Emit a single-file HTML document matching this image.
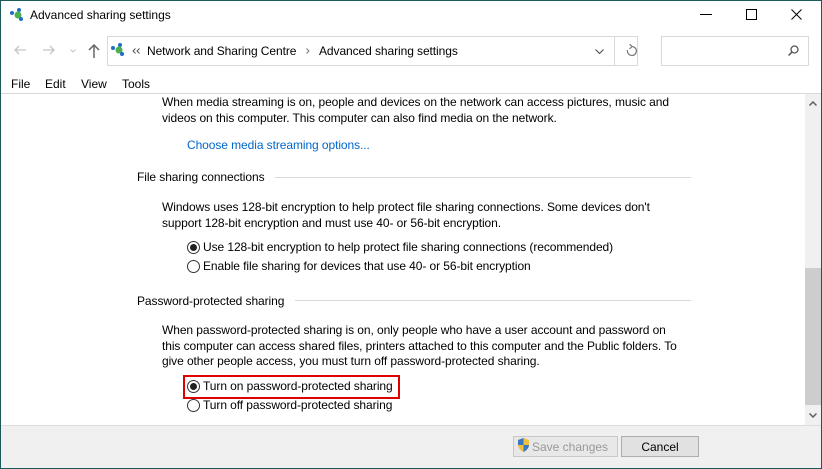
<!DOCTYPE html>
<html><head><style>
*{margin:0;padding:0;box-sizing:border-box}
body{width:822px;height:469px;overflow:hidden;background:#fff;font-family:"Liberation Sans",sans-serif;font-size:12px;color:#000;position:relative}
.a{position:absolute;white-space:nowrap}
.t{letter-spacing:-0.08px}
.frame{position:absolute;left:0;top:0;width:822px;height:469px;border:1px solid #1c5a5a;pointer-events:none}
.rad{position:absolute;width:13px;height:13px;border:1px solid #333;border-radius:50%;background:#fff}
.rad.on::after{content:"";position:absolute;left:2px;top:2px;width:7px;height:7px;border-radius:50%;background:#222}
.hr{position:absolute;height:1px;background:#d9d9d9}
svg{position:absolute}
</style></head><body>
<svg style="left:9px;top:7px" width="16" height="14"><circle cx="3" cy="6" r="2" fill="#1e6fc2"/><circle cx="10" cy="3" r="2" fill="#1e6fc2"/><circle cx="9" cy="8" r="3.5" fill="#4caf50"/><circle cx="12" cy="12" r="2" fill="#1e6fc2"/></svg>
<div class="a" style="left:30px;top:8px">Advanced sharing settings</div>
<svg style="left:700px;top:14px" width="12" height="2"><path d="M0 0.5H12" stroke="#000"/></svg>
<svg style="left:746px;top:9px" width="11" height="11"><rect x="0.5" y="0.5" width="10" height="10" fill="none" stroke="#000"/></svg>
<svg style="left:791px;top:9px" width="11" height="11"><path d="M0.5 0.5L10.5 10.5M10.5 0.5L0.5 10.5" stroke="#000"/></svg>
<svg style="left:14px;top:45px" width="12" height="10"><path d="M1 5H12M5 1L1 5L5 9" stroke="#c5c5c5" fill="none" stroke-width="1.3"/></svg>
<svg style="left:43px;top:45px" width="12" height="10"><path d="M0 5H11M7 1L11 5L7 9" stroke="#c5c5c5" fill="none" stroke-width="1.3"/></svg>
<svg style="left:70px;top:49px" width="6" height="4"><path d="M0.5 0.5L3 3L5.5 0.5" stroke="#c5c5c5" fill="none"/></svg>
<svg style="left:88px;top:44px" width="12" height="14"><path d="M6 14V1M1 6L6 1L11 6" stroke="#666" fill="none" stroke-width="1.5"/></svg>
<div class="a" style="left:107px;top:36px;width:531px;height:30px;border:1px solid #d9d9d9"></div>
<div class="a" style="left:614px;top:36px;width:1px;height:30px;background:#d9d9d9"></div>
<svg style="left:110px;top:42px" width="16" height="14"><circle cx="3" cy="6" r="2" fill="#1e6fc2"/><circle cx="10" cy="3" r="2" fill="#1e6fc2"/><circle cx="9" cy="8" r="3.5" fill="#4caf50"/><circle cx="12" cy="12" r="2" fill="#1e6fc2"/></svg>
<svg style="left:132px;top:48px" width="8" height="6"><path d="M3.5 0.5L1 3L3.5 5.5M7.5 0.5L5 3L7.5 5.5" stroke="#555" fill="none"/></svg>
<div class="a t" style="left:147px;top:44px">Network and Sharing Centre</div>
<svg style="left:306px;top:48px" width="4" height="6"><path d="M0.5 0.5L3 3L0.5 5.5" stroke="#777" fill="none"/></svg>
<div class="a t" style="left:319px;top:44px">Advanced sharing settings</div>
<svg style="left:595px;top:49px" width="9" height="5"><path d="M0.5 0.5L4.5 4.5L8.5 0.5" stroke="#555" fill="none" stroke-width="1.2"/></svg>
<svg style="left:626px;top:44px" width="11" height="13"><path d="M5.5 2.5A4.5 4.5 0 1 1 1.5 6" stroke="#777" fill="none" stroke-width="1.2"/><path d="M3.5 0L6 2.5L3.5 5" stroke="#777" fill="none" stroke-width="1.2"/></svg>
<div class="a" style="left:661px;top:36px;width:148px;height:30px;border:1px solid #d9d9d9"></div>
<svg style="left:788px;top:45px" width="11" height="11"><circle cx="6.5" cy="4.5" r="3.5" stroke="#555" fill="none" stroke-width="1.3"/><path d="M4 7L0.5 10.5" stroke="#555" stroke-width="1.5"/></svg>
<div class="a" style="left:11px;top:77px">File</div>
<div class="a" style="left:45px;top:77px">Edit</div>
<div class="a" style="left:81px;top:77px">View</div>
<div class="a" style="left:122px;top:77px">Tools</div>
<div class="hr" style="left:0;top:93px;width:822px"></div>
<div class="a" style="left:805px;top:94px;width:16px;height:331px;background:#f0f0f0"></div>
<div class="a" style="left:805px;top:268px;width:16px;height:137px;background:#cdcdcd"></div>
<svg style="left:809px;top:101px" width="8" height="5"><path d="M0.5 4.5L4 1L7.5 4.5" stroke="#606060" fill="none" stroke-width="1.5"/></svg>
<svg style="left:809px;top:413px" width="8" height="5"><path d="M0.5 0.5L4 4L7.5 0.5" stroke="#606060" fill="none" stroke-width="1.5"/></svg>
<div class="a t" style="left:162px;top:95px;line-height:15.5px">When media streaming is on, people and devices on the network can access pictures, music and<br>videos on this computer. This computer can also find media on the network.</div>
<div class="a t" style="left:187px;top:138px;color:#0066cc">Choose media streaming options...</div>
<div class="a t" style="left:137px;top:170px">File sharing connections</div>
<div class="hr" style="left:275px;top:177px;width:416px"></div>
<div class="a t" style="left:162px;top:200px;line-height:15.5px">Windows uses 128-bit encryption to help protect file sharing connections. Some devices don't<br>support 128-bit encryption and must use 40- or 56-bit encryption.</div>
<div class="rad on" style="left:187px;top:241px"></div>
<div class="a t" style="left:203px;top:240px">Use 128-bit encryption to help protect file sharing connections (recommended)</div>
<div class="rad" style="left:187px;top:260px"></div>
<div class="a t" style="left:203px;top:259px">Enable file sharing for devices that use 40- or 56-bit encryption</div>
<div class="a t" style="left:137px;top:294px">Password-protected sharing</div>
<div class="hr" style="left:295px;top:300px;width:396px"></div>
<div class="a t" style="left:162px;top:323px;line-height:15.5px">When password-protected sharing is on, only people who have a user account and password on<br>this computer can access shared files, printers attached to this computer and the Public folders. To<br>give other people access, you must turn off password-protected sharing.</div>
<div class="a" style="left:183px;top:375px;width:217px;height:24px;border:2px solid #e00000"></div>
<div class="rad on" style="left:187px;top:380px"></div>
<div class="a t" style="left:203px;top:379px">Turn on password-protected sharing</div>
<div class="rad" style="left:187px;top:399px"></div>
<div class="a t" style="left:203px;top:398px">Turn off password-protected sharing</div>
<div class="a" style="left:1px;top:425px;width:820px;height:43px;background:#f0f0f0;border-top:1px solid #dcdcdc"></div>
<div class="a" style="left:513px;top:436px;width:105px;height:21px;border:1px solid #c8c8c8;background:#e8e8e8"></div>
<svg style="left:518px;top:438px" width="11" height="14"><path d="M5.5 0L11 2V7C11 10 8 13 5.5 14C3 13 0 10 0 7V2Z" fill="#f0c040"/><path d="M5.5 0V7H0V2ZM5.5 7H11C11 10 8 13 5.5 14Z" fill="#3a78c4"/></svg>
<div class="a" style="left:532px;top:440px;color:#999">Save changes</div>
<div class="a" style="left:621px;top:436px;width:78px;height:21px;border:1px solid #adadad;background:#e1e1e1"></div>
<div class="a" style="left:621px;top:440px;width:78px;text-align:center">Cancel</div>
<div class="frame"></div>
</body></html>
